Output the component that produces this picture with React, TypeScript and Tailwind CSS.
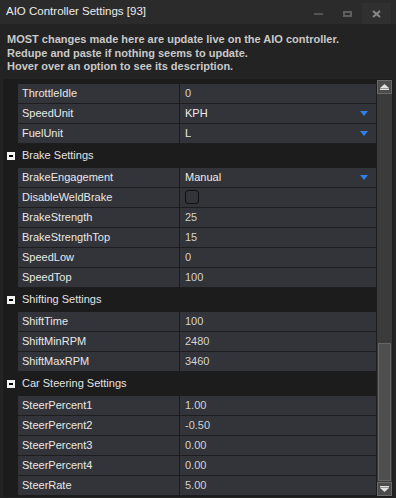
import React from "react";

type Row =
  | { kind: "header"; label: string }
  | { kind: "text"; name: string; value: string }
  | { kind: "select"; name: string; value: string }
  | { kind: "check"; name: string };

const rows: Row[] = [
  { kind: "text", name: "ThrottleIdle", value: "0" },
  { kind: "select", name: "SpeedUnit", value: "KPH" },
  { kind: "select", name: "FuelUnit", value: "L" },
  { kind: "header", label: "Brake Settings" },
  { kind: "select", name: "BrakeEngagement", value: "Manual" },
  { kind: "check", name: "DisableWeldBrake" },
  { kind: "text", name: "BrakeStrength", value: "25" },
  { kind: "text", name: "BrakeStrengthTop", value: "15" },
  { kind: "text", name: "SpeedLow", value: "0" },
  { kind: "text", name: "SpeedTop", value: "100" },
  { kind: "header", label: "Shifting Settings" },
  { kind: "text", name: "ShiftTime", value: "100" },
  { kind: "text", name: "ShiftMinRPM", value: "2480" },
  { kind: "text", name: "ShiftMaxRPM", value: "3460" },
  { kind: "header", label: "Car Steering Settings" },
  { kind: "text", name: "SteerPercent1", value: "1.00" },
  { kind: "text", name: "SteerPercent2", value: "-0.50" },
  { kind: "text", name: "SteerPercent3", value: "0.00" },
  { kind: "text", name: "SteerPercent4", value: "0.00" },
  { kind: "text", name: "SteerRate", value: "5.00" },
];

function Arrow() {
  return (
    <svg width="8" height="5" viewBox="0 0 8 5" className="shrink-0">
      <polygon points="0,0 8,0 4,5" fill="#2f7fe6" />
    </svg>
  );
}

function PropRow({ r }: { r: Row }) {
  if (r.kind === "header") {
    return (
      <div className="flex h-[24px] items-center">
        <div className="ml-[4px] flex h-[8px] w-[8px] items-center justify-center bg-[#f2f2f2]">
          <div className="h-[2px] w-[4px] bg-black" />
        </div>
        <span className="ml-[7px] text-[11px] text-[#e2e2e2]">{r.label}</span>
      </div>
    );
  }
  return (
    <div className="ml-[15px] flex h-[20px] border-b border-[#1d1d1f]">
      <div className="flex w-[161px] items-center bg-[#333439] pl-[4px] text-[11px] text-[#e8e8e8]">
        {r.name}
      </div>
      <div className="w-px bg-[#1d1d1f]" />
      <div className="flex flex-1 items-center bg-[#333439] pl-[5px] pr-[8px] text-[11px] text-[#d2d2d2]">
        {r.kind === "check" ? (
          <div className="h-[14px] w-[14px] rounded-[3px] border border-[#0e0e0e]" />
        ) : (
          <span className={r.kind === "select" ? "text-[#ececec]" : ""}>{r.value}</span>
        )}
        {r.kind === "select" && (
          <>
            <div className="flex-1" />
            <Arrow />
          </>
        )}
      </div>
    </div>
  );
}

export default function App() {
  return (
    <div className="flex h-[498px] w-[396px] flex-col overflow-hidden bg-[#232323] font-['Liberation_Sans',Arial,sans-serif]">
      {/* Title bar */}
      <div className="flex h-[24px] shrink-0 items-center bg-[#2b2b2b]">
        <span className="pl-[6px] text-[11.5px] text-[#ebebeb]">AIO Controller Settings [93]</span>
        <div className="flex-1" />
        <div className="flex h-[21px] w-[29px] items-center justify-center self-end">
          <div className="h-[2px] w-[9px] bg-[#555555]" />
        </div>
        <div className="flex h-[21px] w-[29px] items-center justify-center self-end">
          <div className="h-[6px] w-[9px] border-[2px] border-[#5e5e5e]" />
        </div>
        <div className="mr-[5px] flex h-[21px] w-[29px] items-center justify-center self-end bg-[#303030]">
          <svg width="9" height="8" viewBox="0 0 9 8">
            <path d="M1 1 L8 7 M8 1 L1 7" stroke="#8a8a8a" strokeWidth="2" />
          </svg>
        </div>
      </div>

      {/* Info text */}
      <div className="px-[7px] pt-[9px] text-[11px] font-bold leading-[13.5px] text-[#c9c9c9]">
        <div>MOST changes made here are update live on the AIO controller.</div>
        <div>Redupe and paste if nothing seems to update.</div>
        <div>Hover over an option to see its description.</div>
      </div>

      {/* Property grid */}
      <div className="mx-[3px] mt-[5px] flex h-[418px] bg-[#1c1c1c]">
        <div className="flex flex-1 flex-col pt-[5px]">
          {rows.map((r, i) => (
            <PropRow key={i} r={r} />
          ))}
        </div>
        <div className="ml-px mr-px mt-px flex h-[416px] w-[15px] flex-col">
          <div className="flex h-[14px] items-center justify-center border border-[#6a6a6a] bg-[#4c4c4c]">
            <svg width="9" height="6" viewBox="0 0 9 6">
              <polygon points="4.5,0 9,4 0,4" fill="#e0e0e0" />
              <rect x="0" y="4.5" width="9" height="1.5" fill="#e0e0e0" />
            </svg>
          </div>
          <div className="flex flex-1 flex-col justify-end bg-[#3b3b3b]">
            <div className="mx-[1px] mb-[1px] h-[138px] border border-[#666666] bg-[#4f4f4f]" />
          </div>
          <div className="flex h-[14px] items-center justify-center border border-[#6a6a6a] bg-[#4c4c4c]">
            <svg width="9" height="6" viewBox="0 0 9 6">
              <rect x="0" y="0" width="9" height="1.5" fill="#e0e0e0" />
              <polygon points="0,2 9,2 4.5,6" fill="#e0e0e0" />
            </svg>
          </div>
        </div>
      </div>
    </div>
  );
}
